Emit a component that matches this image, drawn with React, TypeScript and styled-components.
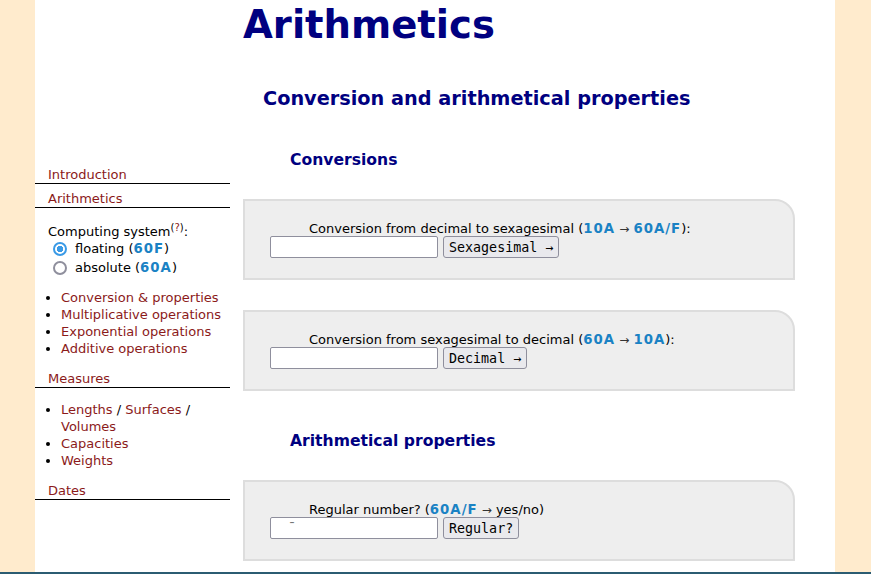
import React from 'react';
import styled, { createGlobalStyle } from 'styled-components';

const GlobalStyle = createGlobalStyle`
  html, body {
    margin: 0;
    padding: 0;
  }
  body {
    background: #ffebcd;
    font-family: 'DejaVu Sans', Verdana, sans-serif;
    font-size: 13px;
    color: #000;
  }
`;

const Page = styled.div`
  width: 800px;
  margin-left: calc(50% - 400.5px);
  background: #fff;
  display: flex;
`;

const Sidebar = styled.nav`
  width: 195px;
  flex-shrink: 0;
  padding-top: 160px;
`;

const Main = styled.main`
  width: 552px;
  margin-left: 13px;
  padding: 2px 0 11px;
`;

const Footer = styled.footer`
  border-top: 2px solid #2b5c72;
`;

const Link = styled.a`
  color: #8b1a1a;
  text-decoration: none;
`;

const NavHead = styled.div<{ $gap?: number }>`
  margin-top: ${p => p.$gap || 0}px;
  padding: 7px 0 1px 13px;
  line-height: 15px;
  border-bottom: 1px solid #000;
`;

const Label = styled.div`
  margin-top: 16px;
  padding-left: 13px;
  line-height: 15px;
`;

const Sup = styled.sup`
  font-size: 10px;
  line-height: 0;
  vertical-align: 5px;
`;

const RadioRow = styled.label`
  display: flex;
  align-items: center;
  height: 19px;
  padding-left: 13px;
  line-height: 15px;
`;

const Radio = styled.input`
  appearance: none;
  box-sizing: border-box;
  width: 14px;
  height: 14px;
  margin: 0 8px 0 5px;
  border: 2px solid #8f8f9d;
  border-radius: 50%;
  background: #fff;
  &:checked {
    border-color: #3a9ae6;
    background: radial-gradient(circle, #3a9ae6 0 3px, #fff 3.5px);
  }
`;

const NavList = styled.ul<{ $gap?: number }>`
  margin: ${p => p.$gap || 12}px 0 0;
  padding: 0 0 0 26px;
  list-style: disc;
  line-height: 17px;
`;

const Code = styled.b`
  color: #1a82c4;
  font-weight: bold;
  font-size: 13.3px;
  letter-spacing: 1px;
  line-height: 0;
`;

const Arrow = styled.span`
  color: #333;
  font-size: 12px;
  line-height: 0;
`;

const Title = styled.h1`
  margin: 0;
  font-size: 38.6px;
  line-height: 46px;
  font-weight: bold;
  color: #000080;
`;

const Subtitle = styled.h2`
  margin: 39px 0 0 20px;
  font-size: 19.3px;
  line-height: 23px;
  font-weight: bold;
  color: #000080;
`;

const Section = styled.h3<{ $gap: number }>`
  margin: ${p => p.$gap}px 0 0 47px;
  font-size: 15.6px;
  line-height: 18px;
  font-weight: bold;
  color: #000080;
`;

const Panel = styled.form<{ $gap: number }>`
  box-sizing: border-box;
  margin-top: ${p => p.$gap}px;
  padding: 20px 0 20px 25px;
  background: #eeeeee;
  border: 2px solid #dddddd;
  border-top-right-radius: 20px;
`;

const Prompt = styled.div`
  padding-left: 39px;
  height: 15px;
  line-height: 15px;
`;

const Controls = styled.div`
  display: flex;
  align-items: center;
  gap: 5px;
  height: 22px;
`;

const Field = styled.input<{ $indent?: number }>`
  box-sizing: border-box;
  width: 168px;
  height: 22px;
  margin: 0;
  padding: 1px 2px 1px ${p => p.$indent || 2}px;
  border: 1px solid #8f8f9d;
  border-radius: 2px;
  background: #fff;
  font-family: 'DejaVu Sans Mono', monospace;
  font-size: 13.33px;
  &::placeholder {
    color: #757575;
  }
`;

const Button = styled.button`
  box-sizing: border-box;
  height: 22px;
  margin: 0;
  padding: 1px 5px 0;
  border: 1px solid #8f8f9d;
  border-radius: 3px;
  background: #e9e9ed;
  color: #000;
  font-family: 'DejaVu Sans Mono', monospace;
  font-size: 13.33px;
  line-height: 19px;
`;

export default function App() {
  return (
    <>
      <GlobalStyle />
      <Page>
        <Sidebar>
          <NavHead>
            <Link href="#">Introduction</Link>
          </NavHead>
          <NavHead>
            <Link href="#">Arithmetics</Link>
          </NavHead>
          <Label>
            Computing system
            <Sup>
              (<Link href="#">?</Link>)
            </Sup>
            :
          </Label>
          <RadioRow>
            <Radio type="radio" name="system" defaultChecked />
            <span>
              floating (<Code>60F</Code>)
            </span>
          </RadioRow>
          <RadioRow>
            <Radio type="radio" name="system" />
            <span>
              absolute (<Code>60A</Code>)
            </span>
          </RadioRow>
          <NavList>
            <li><Link href="#">Conversion &amp; properties</Link></li>
            <li><Link href="#">Multiplicative operations</Link></li>
            <li><Link href="#">Exponential operations</Link></li>
            <li><Link href="#">Additive operations</Link></li>
          </NavList>
          <NavHead $gap={7}>
            <Link href="#">Measures</Link>
          </NavHead>
          <NavList $gap={13}>
            <li>
              <Link href="#">Lengths</Link> / <Link href="#">Surfaces</Link> /{' '}
              <Link href="#">Volumes</Link>
            </li>
            <li><Link href="#">Capacities</Link></li>
            <li><Link href="#">Weights</Link></li>
          </NavList>
          <NavHead $gap={7}>
            <Link href="#">Dates</Link>
          </NavHead>
        </Sidebar>
        <Main>
          <Title>Arithmetics</Title>
          <Subtitle>Conversion and arithmetical properties</Subtitle>
          <Section $gap={41}>Conversions</Section>
          <Panel $gap={30} onSubmit={e => e.preventDefault()}>
            <Prompt>
              Conversion from decimal to sexagesimal (<Code>10A</Code> <Arrow>→</Arrow> <Code>60A/F</Code>):
            </Prompt>
            <Controls>
              <Field type="text" />
              <Button type="button">Sexagesimal →</Button>
            </Controls>
          </Panel>
          <Panel $gap={30} onSubmit={e => e.preventDefault()}>
            <Prompt>
              Conversion from sexagesimal to decimal (<Code>60A</Code> <Arrow>→</Arrow> <Code>10A</Code>):
            </Prompt>
            <Controls>
              <Field type="text" />
              <Button type="button">Decimal →</Button>
            </Controls>
          </Panel>
          <Section $gap={41}>Arithmetical properties</Section>
          <Panel $gap={30} onSubmit={e => e.preventDefault()}>
            <Prompt>
              Regular number? (<Code>60A/F</Code> <Arrow>→</Arrow> yes/no)
            </Prompt>
            <Controls>
              <Field type="text" $indent={17} placeholder="¯" />
              <Button type="button">Regular?</Button>
            </Controls>
          </Panel>
        </Main>
      </Page>
      <Footer />
    </>
  );
}
